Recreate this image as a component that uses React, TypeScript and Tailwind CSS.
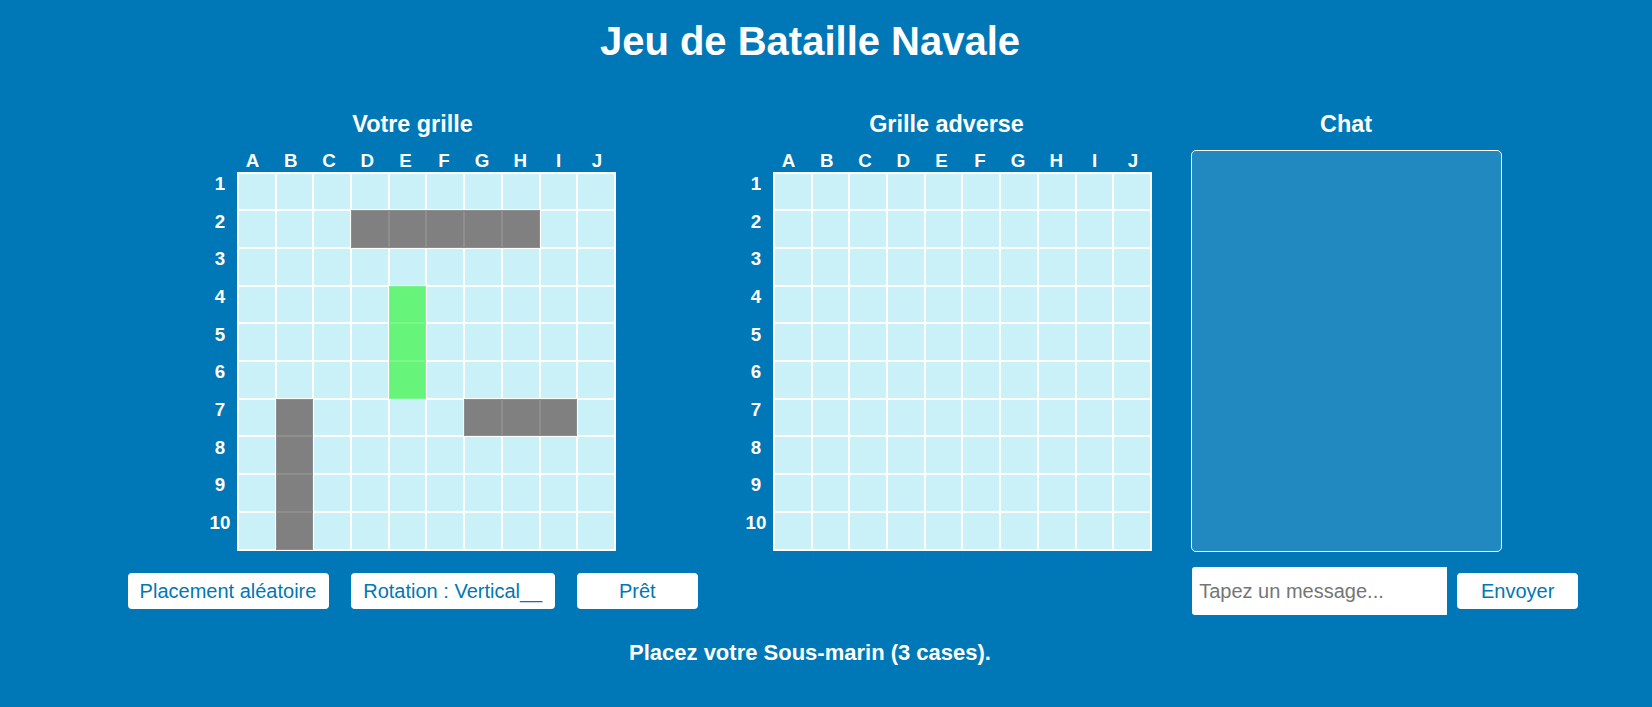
import React from "react";

const COLS = ["A", "B", "C", "D", "E", "F", "G", "H", "I", "J"];
const ROWS = [1, 2, 3, 4, 5, 6, 7, 8, 9, 10];

type CellState = "water" | "ship" | "preview";

function myBoardState(r: number, c: number): CellState {
  // r, c are 0-indexed
  if (r === 1 && c >= 3 && c <= 7) return "ship";
  if (r === 6 && c >= 6 && c <= 8) return "ship";
  if (c === 1 && r >= 6 && r <= 9) return "ship";
  if (c === 4 && r >= 3 && r <= 5) return "preview";
  return "water";
}

function Cell({ state }: { state: CellState }) {
  if (state === "ship") {
    return <div className="w-[37.7px] h-[37.7px] border border-[#8e8e8e] bg-[#808080]" />;
  }
  if (state === "preview") {
    return <div className="w-[37.7px] h-[37.7px] border border-[#7cf58d] bg-[#66f47a]" />;
  }
  return <div className="w-[37.7px] h-[37.7px] border border-white bg-[#caf0f8]" />;
}

function Board({ mine }: { mine: boolean }) {
  return (
    <div className={mine ? "mt-[12.4px] pr-[4px]" : "mt-[12.4px]"}>
      <div className="flex pl-[28.5px] h-[21.6px]">
        {COLS.map((c) => (
          <div
            key={c}
            className="w-[38.25px] text-center text-[18.75px] leading-[21.6px] font-bold text-white"
          >
            {c}
          </div>
        ))}
      </div>
      <div className="flex gap-[2px] items-start">
        <div className="flex flex-col w-[30px] -mt-[6.5px]">
          {ROWS.map((r) => (
            <div
              key={r}
              className="h-[37.7px] flex items-center justify-center text-[18.75px] font-bold text-white"
            >
              {r}
            </div>
          ))}
        </div>
        <div className="grid grid-cols-10 border border-white bg-white">
          {ROWS.map((_, r) =>
            COLS.map((__, c) => (
              <Cell key={`${r}-${c}`} state={mine ? myBoardState(r, c) : "water"} />
            ))
          )}
        </div>
      </div>
    </div>
  );
}

function SectionTitle({ children }: { children: React.ReactNode }) {
  return (
    <h3 className="text-center text-[23.4px] leading-[26.9px] font-bold text-white">{children}</h3>
  );
}

export default function App() {
  return (
    <div className="min-h-screen bg-[#0077b6] font-['Liberation_Sans',Arial,sans-serif] text-white">
      <div className="w-[1620px] flex flex-col">
        <h1 className="mt-[18px] text-center text-[40px] leading-[46px] font-bold">
          Jeu de Bataille Navale
        </h1>

        <div className="mt-[46.75px] flex justify-center items-start pl-[4px]">
          {/* Left: my grid */}
          <div className="w-[580px] flex flex-col items-center">
            <SectionTitle>Votre grille</SectionTitle>
            <Board mine />
            <div className="mt-[22.3px] flex gap-[22.5px]">
              <button className="w-[201px] h-[36px] bg-white rounded-[4px] text-[#0077b6] text-[20px]">
                Placement aléatoire
              </button>
              <button className="w-[203.5px] h-[36px] bg-white rounded-[4px] text-[#0077b6] text-[20px]">
                Rotation : Vertical__
              </button>
              <button className="w-[120.5px] h-[36px] bg-white rounded-[4px] text-[#0077b6] text-[20px]">
                Prêt
              </button>
            </div>
          </div>

          {/* Middle: opponent grid */}
          <div className="w-[488px] flex flex-col items-center">
            <SectionTitle>Grille adverse</SectionTitle>
            <Board mine={false} />
          </div>

          {/* Right: chat */}
          <div className="w-[311px] flex flex-col">
            <SectionTitle>Chat</SectionTitle>
            <div className="mt-[12.4px] h-[401.7px] border border-white rounded-[5px] bg-white/[0.13]" />
            <div className="mt-[15.3px] ml-[1.7px] w-[386px] flex items-center gap-[10px]">
              <input
                type="text"
                placeholder="Tapez un message..."
                className="w-[255px] h-[48px] bg-white rounded-l-[3px] pl-[7px] text-[20px] text-black placeholder:text-[#757575] outline-none"
              />
              <button className="w-[121px] h-[36px] bg-white rounded-[4px] text-[#0077b6] text-[20px]">
                Envoyer
              </button>
            </div>
          </div>
        </div>

        <p className="mt-[25.4px] text-center text-[22px] leading-[25.3px] font-bold">
          Placez votre Sous-marin (3 cases).
        </p>
      </div>
    </div>
  );
}
